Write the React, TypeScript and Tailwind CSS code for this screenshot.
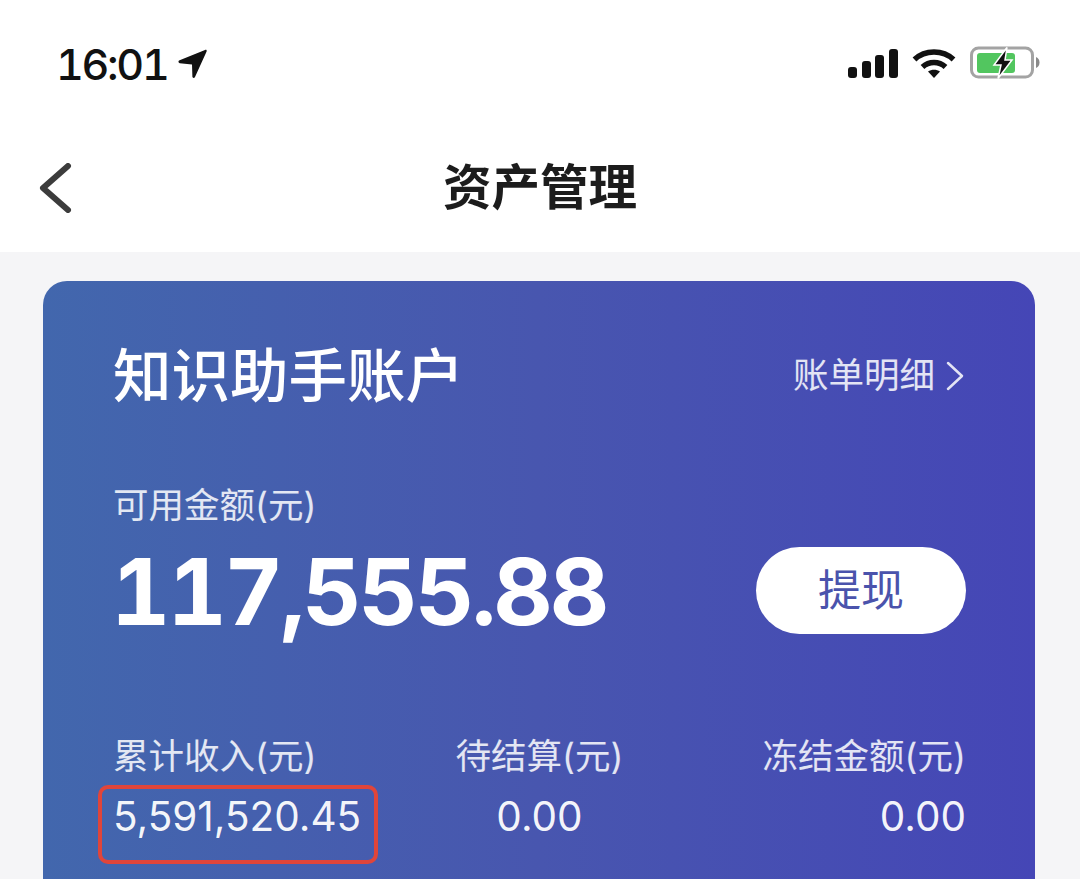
const sans = 'font-["Inter","Noto_Sans_CJK_SC",sans-serif]'

function StatusBar() {
  return (
    <div className="flex h-[130px] items-start justify-between pt-[38px] pl-[56px] pr-[40px]">
      <div className="flex items-center gap-[10px]">
        <span className="text-[43px] leading-[52px] font-medium tabular-nums tracking-[-2.300px] text-[#111]">16:01</span>
        <svg width="30" height="30" viewBox="0 0 30 30" fill="#111">
          <path d="M1 11.5 27 1c1.3-.5 2 .3 1.600 1.400L17 28c-.6 1.300-2.400 1.200-2.600-.2L14 15.500 1.800 14.200C.4 14 0 12.100 1 11.500Z" />
        </svg>
      </div>
      <div className="flex items-center gap-[14px] pt-[8px]">
        <svg width="50" height="32" viewBox="0 0 50 32" fill="#111">
          <rect x="0" y="20" width="9" height="11" rx="3" />
          <rect x="14" y="14" width="9" height="17" rx="3" />
          <rect x="27" y="8" width="9" height="23" rx="3" />
          <rect x="41" y="2" width="9" height="29" rx="3" />
        </svg>
        <svg width="44" height="32" viewBox="0 0 44 32" fill="none" stroke="#111" strokeWidth="5.5">
          <path d="M2.500 12.500C13 2.500 31 2.500 41.500 12.500" />
          <path d="M10.500 20c6.500-6 16.500-6 23 0" />
          <path d="M22 31l-6-6.500c3.500-2.500 8.500-2.500 12 0Z" fill="#111" stroke="none" />
        </svg>
        <svg width="70" height="34" viewBox="0 0 70 34" fill="none">
          <rect x="1.500" y="2" width="61" height="29" rx="7" stroke="#a3a3a3" strokeWidth="3" />
          <rect x="7" y="7" width="38" height="20" rx="3" fill="#52c65f" />
          <path d="M66 11c2.500 1 3.500 3 3.500 5.500S68.500 21 66 22Z" fill="#8a8a8a" />
          <path d="M37 1.500 24 19h7l-3 13.500L42 14h-7l2-12.500Z" fill="#111" stroke="#fff" strokeWidth="1.500" />
        </svg>
      </div>
    </div>
  )
}

function Stat({ label, value, align }: { label: string; value: string; align: string }) {
  return (
    <div className={`flex flex-col ${align}`}>
      <span className="text-[35.500px] leading-[44px] text-white/85">{label}</span>
      <span className="mt-[16px] text-[40.500px] leading-[44px] text-white/95">{value}</span>
    </div>
  )
}

export default function App() {
  return (
    <div className={`flex h-[879px] w-[1080px] flex-col overflow-hidden bg-[#f5f5f7] ${sans}`}>
      <div className="bg-white">
        <StatusBar />
        <div className="relative flex h-[122px] items-start justify-center pt-[29px]">
          <svg className="absolute top-[33px] left-[38px]" width="34" height="50" viewBox="0 0 34 50" fill="none" stroke="#3c3c3c" strokeWidth="6" strokeLinecap="round" strokeLinejoin="round">
            <path d="M30 3 5 25l25 22" />
          </svg>
          <h1 className="text-[48.500px] leading-[58px] font-semibold text-[#1c1c1c]">资产管理</h1>
        </div>
      </div>
      <div className="mt-[29px] ml-[43px] mr-[45px] flex-1 rounded-t-[24px] bg-gradient-to-r from-[#4267ad] via-[#4856af] to-[#4546b6] pl-[70px] pr-[69px] pt-[60px]">
        <div className="flex items-center justify-between">
          <h2 className="text-[58.500px] leading-[70px] font-medium text-white">知识助手账户</h2>
          <div className="flex items-center text-white/85">
            <span className="text-[35.500px]">账单明细</span>
            <svg className="ml-[11px] mr-[2px]" width="18" height="30" viewBox="0 0 18 30" fill="none" stroke="currentColor" strokeWidth="2.500" strokeLinecap="round" strokeLinejoin="round">
              <path d="M2 2l14 13L2 28" />
            </svg>
          </div>
        </div>
        <div className="mt-[73px] text-[35.500px] leading-[44px] text-white/85">可用金额(元)</div>
        <div className="mt-[14px] flex items-center justify-between">
          <span className="-ml-[2px] text-[92px] leading-[100px] font-bold tabular-nums tracking-[-3px] text-white">117,555.88</span>
          <button className="mt-[-4px] flex h-[87px] w-[210px] items-center justify-center rounded-full bg-white text-[43px] text-[#4a53ac]">
            提现
          </button>
        </div>
        <div className="mt-[93px] grid grid-cols-3">
          <div className="relative">
            <Stat label="累计收入(元)" value="5,591,520.45" align="items-start" />
            <div className="absolute top-[50px] left-[-15px] h-[79px] w-[280px] rounded-[10px] border-[4px] border-[#e0453a]" />
          </div>
          <Stat label="待结算(元)" value="0.00" align="items-center" />
          <Stat label="冻结金额(元)" value="0.00" align="items-end" />
        </div>
      </div>
    </div>
  )
}
